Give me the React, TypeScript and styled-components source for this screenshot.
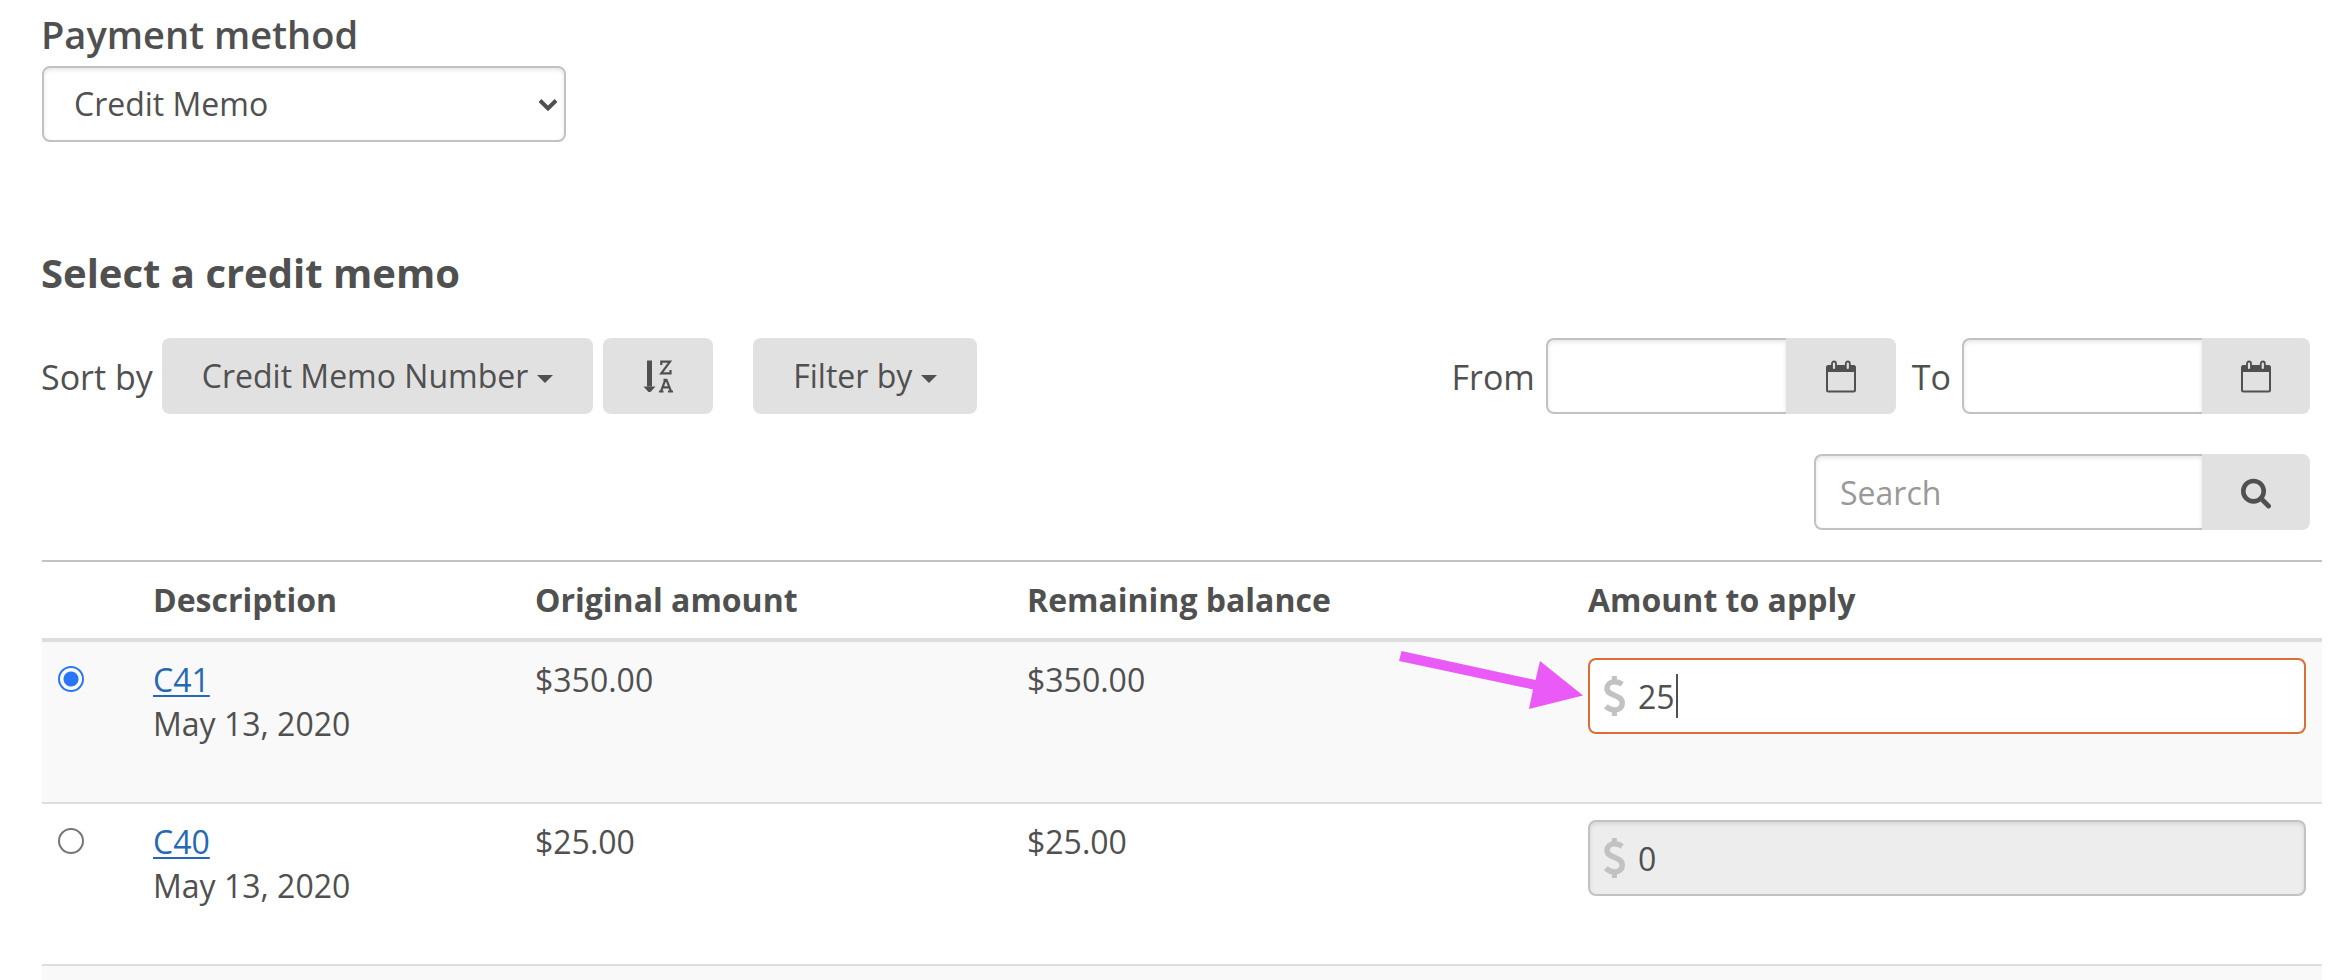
import React, { useState } from "react";
import styled, { createGlobalStyle, css } from "styled-components";

const color = {
  text: "#505050",
  muted: "#999999",
  link: "#2569b3",
  line: "#c2c2c2",
  rowLine: "#dddddd",
  stripe: "#f9f9f9",
  button: "#e1e1e1",
  disabled: "#ededed",
  accent: "#da6f36",
  radio: "#2a76fb",
  pointer: "#ea5af6",
};

const GlobalStyle = createGlobalStyle`
  *, *::before, *::after { box-sizing: border-box; }
  body {
    margin: 0;
    background: #fff;
    color: ${color.text};
    font: 32px/44px "Open Sans", sans-serif;
  }
  button, input, select { font: inherit; color: inherit; margin: 0; }
`;

const Page = styled.main`
  display: flex;
  flex-direction: column;
  padding: 10px 24px 0 41px;
  height: 100vh;
  overflow: hidden;
`;

const Field = styled.div`
  display: flex;
  flex-direction: column;
  align-items: flex-start;
`;

const FieldLabel = styled.label`
  font-size: 38px;
  line-height: 48px;
  font-weight: 600;
  margin-bottom: 8px;
`;

const SelectWrap = styled.div`
  position: relative;
  width: 524px;
  max-width: 100%;
  margin-left: 1px;
  svg {
    position: absolute;
    right: 8px;
    top: 32px;
    pointer-events: none;
  }
`;

const control = css`
  height: 76px;
  border: 2px solid ${color.line};
  border-radius: 8px;
  background: #fff;
  box-shadow: inset 0 2px 4px rgba(0, 0, 0, 0.1);
  outline: none;
`;

const Select = styled.select`
  ${control}
  appearance: none;
  width: 100%;
  padding: 0 30px;
`;

const Heading = styled.h2`
  margin: 103px 0 37px;
  font-size: 40px;
  line-height: 56px;
  font-weight: 700;
`;

const Toolbar = styled.div`
  display: flex;
  justify-content: space-between;
  padding-right: 12px;
`;

const ToolGroup = styled.div<{ $gap: number }>`
  display: flex;
  align-items: center;
  gap: ${(p) => p.$gap}px;
`;

const ToolLabel = styled.span`
  padding-top: 2px;
  font-size: 34px;
`;

const Button = styled.button<{ $width?: number; $joined?: boolean; $apart?: boolean }>`
  display: inline-flex;
  align-items: center;
  justify-content: center;
  gap: 9px;
  height: 76px;
  padding: 0 ${(p) => (p.$width ? 0 : 40)}px;
  ${(p) => p.$width && `width: ${p.$width}px;`}
  margin-left: ${(p) => (p.$apart ? 30 : 0)}px;
  border: 0;
  border-radius: ${(p) => (p.$joined ? "0 8px 8px 0" : "8px")};
  background: ${color.button};
  white-space: nowrap;
`;

const Caret = styled.span`
  border: 8px solid transparent;
  border-top-color: currentColor;
  border-bottom: 0;
  margin-top: 6px;
`;

const InputGroup = styled.div`
  display: flex;
`;

const JoinedInput = styled.input<{ $wide?: boolean }>`
  ${control}
  width: ${(p) => (p.$wide ? 388 : 240)}px;
  padding: 0 24px;
  border-right: 0;
  border-radius: 8px 0 0 8px;
  &::placeholder { color: ${color.muted}; opacity: 1; }
`;

const SearchRow = styled.div`
  display: flex;
  justify-content: flex-end;
  padding: 40px 12px 30px 0;
`;

const TableArea = styled.div`
  padding-left: 1px;
`;

const Table = styled.table`
  width: 100%;
  table-layout: fixed;
  border-collapse: separate;
  border-spacing: 0;
  border-top: 2px solid ${color.line};
`;

const Col = styled.col<{ $width?: number }>`
  width: ${(p) => (p.$width ? `${p.$width}px` : "auto")};
`;

const Th = styled.th`
  height: 80px;
  padding: 16px;
  text-align: left;
  font-weight: 700;
  border-bottom: 4px solid ${color.rowLine};
`;

const Row = styled.tr`
  &:nth-child(odd) { background: ${color.stripe}; }
`;

const Td = styled.td`
  height: 162px;
  padding: 16px;
  vertical-align: top;
  border-bottom: 2px solid ${color.rowLine};
`;

const Radio = styled.input`
  appearance: none;
  display: block;
  width: 26px;
  height: 26px;
  margin-top: 8px;
  border: 2px solid #767676;
  border-radius: 50%;
  background: #fff;
  &:checked {
    border-color: ${color.radio};
    background: radial-gradient(circle, ${color.radio} 0 7px, #fff 8px);
  }
`;

const Link = styled.a`
  color: ${color.link};
  text-decoration: underline;
  text-decoration-thickness: 2px;
  text-underline-offset: 3px;
`;

const Amount = styled.div`
  position: relative;
`;

const CurrencyMark = styled.svg`
  position: absolute;
  left: 16px;
  top: 18px;
  color: ${color.line};
`;

const AmountInput = styled.input<{ $active: boolean }>`
  ${control}
  display: block;
  width: 100%;
  padding: 0 20px 0 48px;
  ${(p) => p.$active && `border-color: ${color.accent}; box-shadow: none;`}
  &:disabled {
    background: ${color.disabled};
    opacity: 1;
  }
`;

const TextCursor = styled.span`
  position: absolute;
  left: 88px;
  top: 16px;
  width: 2px;
  height: 44px;
  background: ${color.text};
`;

const Pointer = styled.svg`
  position: absolute;
  right: 100%;
  top: -8px;
  margin-right: 5px;
  color: ${color.pointer};
`;

const ChevronIcon = () => (
  <svg width="20" height="14" viewBox="0 0 20 14" fill="none" aria-hidden="true">
    <path d="M2 2.5 10 10.5 18 2.5" stroke="currentColor" strokeWidth="4" />
  </svg>
);

const SortIcon = () => (
  <svg width="30" height="34" viewBox="0 0 30 34" fill="none" stroke="currentColor" aria-hidden="true">
    <path d="M6.5 1.5V27.500" strokeWidth="5" />
    <path d="M0.5 27.500H12.500L7.500 33H5.500Z" fill="currentColor" stroke="none" />
    <path d="M18.300 6V2.700H27L18.300 14.300H27.500V11" strokeWidth="2.200" />
    <path d="M18 32.300L22.200 21H23.600L28 32.300M19.600 28.400H26.400M16 32.500H20.500M25 32.500H30M20.500 20.800H23.500" strokeWidth="2.200" />
  </svg>
);

const CalendarIcon = () => (
  <svg width="30" height="34" viewBox="0 0 30 34" fill="none" stroke="currentColor" aria-hidden="true">
    <rect x="1" y="7" width="28" height="25.5" rx="1.5" strokeWidth="2" />
    <path d="M1 6.500H29V13H1Z" fill="currentColor" stroke="none" />
    <rect x="6" y="2.500" width="4" height="8.5" rx="2" fill={color.button} strokeWidth="1.800" />
    <rect x="19.800" y="2.500" width="4" height="8.5" rx="2" fill={color.button} strokeWidth="1.800" />
  </svg>
);

const SearchIcon = () => (
  <svg width="30" height="34" viewBox="0 0 30 34" fill="none" stroke="currentColor" aria-hidden="true">
    <circle cx="12.5" cy="16.2" r="10.2" strokeWidth="4.600" />
    <path d="M20 23.500L27.500 31" strokeWidth="4.800" strokeLinecap="round" />
  </svg>
);

const DollarIcon = () => (
  <CurrencyMark width="21" height="40" viewBox="0 0 21 40" fill="none" stroke="currentColor" aria-hidden="true">
    <path d="M10.400 0V6M10.400 34V40" strokeWidth="5" />
    <path
      d="M18.200 8.200C15 6 12.500 5.800 10.500 5.800C6 5.800 3 8.800 3 12.500C3 20.500 18.200 18 18.200 27C18.200 31.500 15 34 10.500 34C7 34 4.500 33 1.800 30.200"
      strokeWidth="5.500"
    />
  </CurrencyMark>
);

const PointerArrow = () => (
  <Pointer width="184" height="60" viewBox="0 0 184 60" aria-hidden="true">
    <path d="M2.500 1 136.500 30 141 11 184 45.500 130 59 134 39.500 0 11Z" fill="currentColor" />
  </Pointer>
);

interface Memo {
  id: string;
  date: string;
  amount: string;
}

const memos: Memo[] = [
  { id: "C41", date: "May 13, 2020", amount: "$350.00" },
  { id: "C40", date: "May 13, 2020", amount: "$25.00" },
];

function DateField({ label, buttonWidth }: { label: string; buttonWidth: number }) {
  const id = `date-${label.toLowerCase()}`;
  return (
    <ToolGroup $gap={11}>
      <ToolLabel as="label" htmlFor={id}>
        {label}
      </ToolLabel>
      <InputGroup>
        <JoinedInput id={id} type="text" />
        <Button type="button" $width={buttonWidth} $joined aria-label={`Choose ${label} date`}>
          <CalendarIcon />
        </Button>
      </InputGroup>
    </ToolGroup>
  );
}

export default function App() {
  const [selected, setSelected] = useState("C41");
  const [values, setValues] = useState<Record<string, string>>({ C41: "25", C40: "0" });

  return (
    <>
      <GlobalStyle />
      <Page>
        <Field>
          <FieldLabel htmlFor="method">Payment method</FieldLabel>
          <SelectWrap>
            <Select id="method">
              <option>Credit Memo</option>
            </Select>
            <ChevronIcon />
          </SelectWrap>
        </Field>

        <Heading>Select a credit memo</Heading>

        <Toolbar>
          <ToolGroup $gap={9}>
            <ToolLabel>Sort by</ToolLabel>
            <ToolGroup $gap={10}>
              <Button type="button">
                Credit Memo Number
                <Caret />
              </Button>
              <Button type="button" $width={110} aria-label="Sort descending">
                <SortIcon />
              </Button>
              <Button type="button" $apart>
                Filter by
                <Caret />
              </Button>
            </ToolGroup>
          </ToolGroup>
          <ToolGroup $gap={16}>
            <DateField label="From" buttonWidth={110} />
            <DateField label="To" buttonWidth={108} />
          </ToolGroup>
        </Toolbar>

        <SearchRow>
          <InputGroup>
            <JoinedInput $wide type="text" placeholder="Search" aria-label="Search" />
            <Button type="button" $width={108} $joined aria-label="Run search">
              <SearchIcon />
            </Button>
          </InputGroup>
        </SearchRow>

        <TableArea>
          <Table>
            <colgroup>
              <Col $width={95} />
              <Col $width={382} />
              <Col $width={492} />
              <Col $width={561} />
              <Col />
            </colgroup>
            <thead>
              <tr>
                <Th aria-label="Selected" />
                <Th>Description</Th>
                <Th>Original amount</Th>
                <Th>Remaining balance</Th>
                <Th>Amount to apply</Th>
              </tr>
            </thead>
            <tbody>
              {memos.map((memo) => {
                const active = memo.id === selected;
                return (
                  <Row key={memo.id}>
                    <Td>
                      <Radio
                        type="radio"
                        name="memo"
                        aria-label={memo.id}
                        checked={active}
                        onChange={() => setSelected(memo.id)}
                      />
                    </Td>
                    <Td>
                      <Link href={`#${memo.id}`}>{memo.id}</Link>
                      <div>{memo.date}</div>
                    </Td>
                    <Td>{memo.amount}</Td>
                    <Td>{memo.amount}</Td>
                    <Td>
                      <Amount>
                        <AmountInput
                          type="text"
                          aria-label={`Amount to apply from ${memo.id}`}
                          $active={active}
                          disabled={!active}
                          value={values[memo.id]}
                          onChange={(e) => setValues({ ...values, [memo.id]: e.target.value })}
                        />
                        <DollarIcon />
                        {active && <TextCursor />}
                        {active && <PointerArrow />}
                      </Amount>
                    </Td>
                  </Row>
                );
              })}
              <Row>
                <Td colSpan={5} />
              </Row>
            </tbody>
          </Table>
        </TableArea>
      </Page>
    </>
  );
}
